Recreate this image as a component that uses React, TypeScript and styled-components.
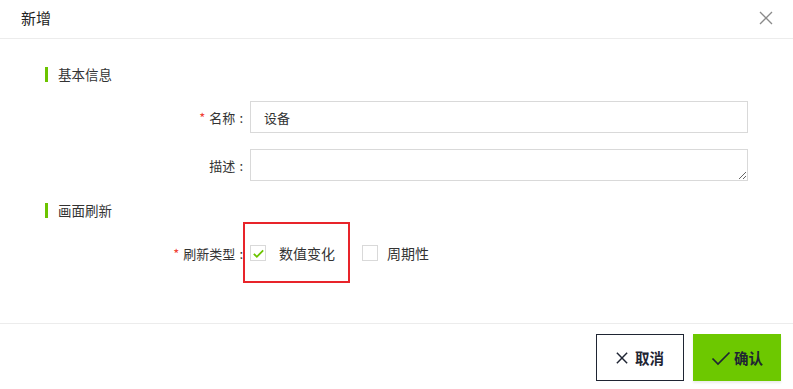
import styled, { createGlobalStyle } from 'styled-components';

const GlobalStyle = createGlobalStyle`
  html, body {
    margin: 0;
    padding: 0;
    background: #fff;
  }
  body {
    font-family: "Noto Sans CJK SC", "Noto Sans", sans-serif;
    color: #333;
  }
  * {
    box-sizing: border-box;
  }
`;

const Dialog = styled.div`
  width: 793px;
  height: 389px;
  display: flex;
  flex-direction: column;
  background: #fff;
`;

const Header = styled.div`
  height: 39px;
  display: flex;
  align-items: center;
  justify-content: space-between;
  padding: 0 20px 0 21px;
  border-bottom: 1px solid #ececec;
`;

const Title = styled.h2`
  margin: 0;
  font-size: 15px;
  font-weight: 400;
  color: #222;
  line-height: 20px;
  margin-top: -2px;
`;

const CloseButton = styled.button`
  border: none;
  background: none;
  padding: 0;
  width: 14px;
  height: 14px;
  display: flex;
  cursor: pointer;
  margin-top: -2px;
`;

const Body = styled.div`
  flex: 1;
  padding: 27px 45px 0;
  position: relative;
`;

const SectionTitle = styled.div<{ $top: number }>`
  display: flex;
  align-items: center;
  gap: 10px;
  margin-top: ${(p) => p.$top}px;
  font-size: 13.5px;
  line-height: 16px;
  color: #333;

  &::before {
    content: '';
    width: 3px;
    height: 15px;
    background: #6cc400;
  }
`;

const FormRow = styled.div<{ $top: number }>`
  display: flex;
  align-items: center;
  margin-top: ${(p) => p.$top}px;
`;

const Label = styled.label<{ $required?: boolean }>`
  width: 205px;
  padding-right: 7px;
  text-align: right;
  font-size: 13px;
  color: #333;

  &::before {
    content: ${(p) => (p.$required ? "'*'" : "''")};
    color: #f04134;
    margin-right: 4px;
  }

  &::after {
    content: ':';
    margin-left: 4px;
  }
`;

const TextInput = styled.input`
  width: 498px;
  height: 32px;
  border: 1px solid #d9d9d9;
  padding: 0 13px;
  font-family: inherit;
  font-size: 13px;
  color: #333;
  outline: none;
`;

const TextArea = styled.textarea`
  width: 498px;
  height: 32px;
  border: 1px solid #d9d9d9;
  padding: 6px 13px;
  font-family: inherit;
  font-size: 13px;
  resize: vertical;
  outline: none;
  display: block;
`;

const Options = styled.div`
  display: flex;
  align-items: center;
  height: 32px;
  position: relative;
`;

const Option = styled.label<{ $gap: number; $space: number }>`
  display: flex;
  align-items: center;
  gap: ${(p) => p.$gap}px;
  margin-right: ${(p) => p.$space}px;
  font-size: 14px;
  color: #333;
  cursor: pointer;
`;

const Box = styled.span`
  width: 16px;
  height: 16px;
  border: 1px solid #d9d9d9;
  display: flex;
  align-items: center;
  justify-content: center;
  background: #fff;
`;

const Highlight = styled.div`
  position: absolute;
  left: -7px;
  top: -15px;
  width: 107px;
  height: 61px;
  border: 2px solid #e8242a;
  pointer-events: none;
`;

const Footer = styled.div`
  height: 66px;
  border-top: 1px solid #ececec;
  display: flex;
  justify-content: flex-end;
  align-items: flex-start;
  gap: 9px;
  padding: 10px 12px 0 0;
`;

const Button = styled.button<{ $primary?: boolean }>`
  width: 88px;
  height: 47px;
  display: flex;
  align-items: center;
  justify-content: center;
  gap: ${(p) => (p.$primary ? 3 : 7)}px;
  font-family: inherit;
  font-size: 14.5px;
  font-weight: 700;
  color: #1f2533;
  cursor: pointer;
  border: ${(p) => (p.$primary ? 'none' : '1px solid #1f2533')};
  background: ${(p) => (p.$primary ? '#6dc800' : '#fff')};
  box-shadow: ${(p) => (p.$primary ? '0 2px 2px rgba(0,0,0,0.08)' : 'none')};
`;

const Check = ({ color, size, w }: { color: string; size: number; w: number }) => (
  <svg width={size} height={size} viewBox="0 0 20 20" fill="none">
    <path d="M1.5 10.5 L7 16 L18.5 4.5" stroke={color} strokeWidth={w} />
  </svg>
);

const Cross = ({ color, size, w }: { color: string; size: number; w: number }) => (
  <svg width={size} height={size} viewBox="0 0 14 14" fill="none">
    <path d="M1 1 L13 13 M13 1 L1 13" stroke={color} strokeWidth={w} />
  </svg>
);

export default function App() {
  return (
    <>
      <GlobalStyle />
      <Dialog>
        <Header>
          <Title>新增</Title>
          <CloseButton aria-label="close">
            <Cross color="#8a8a8a" size={14} w={1.3} />
          </CloseButton>
        </Header>
        <Body>
          <SectionTitle $top={0}>基本信息</SectionTitle>
          <FormRow $top={19}>
            <Label $required>名称</Label>
            <TextInput defaultValue="设备" />
          </FormRow>
          <FormRow $top={16}>
            <Label>描述</Label>
            <TextArea />
          </FormRow>
          <SectionTitle $top={21}>画面刷新</SectionTitle>
          <FormRow $top={19}>
            <Label $required>刷新类型</Label>
            <Options>
              <Highlight />
              <Option $gap={13} $space={27}>
                <Box>
                  <Check color="#6cc400" size={11} w={3.2} />
                </Box>
                数值变化
              </Option>
              <Option $gap={9} $space={0}>
                <Box />
                周期性
              </Option>
            </Options>
          </FormRow>
        </Body>
        <Footer>
          <Button>
            <Cross color="#1f2533" size={12} w={1.7} />
            取消
          </Button>
          <Button $primary>
            <Check color="#1f2533" size={20} w={1.7} />
            确认
          </Button>
        </Footer>
      </Dialog>
    </>
  );
}
